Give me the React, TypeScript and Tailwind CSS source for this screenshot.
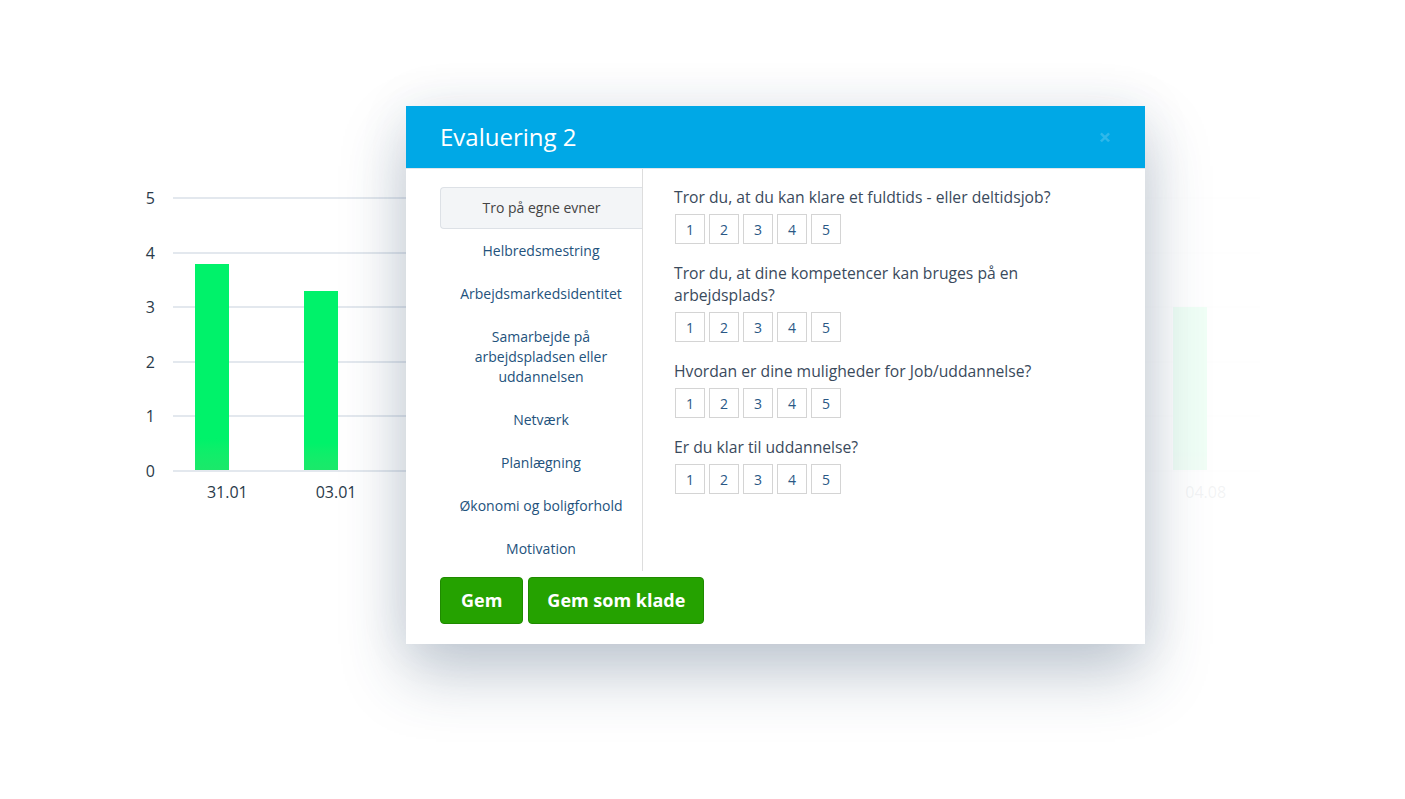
import React from "react"

const yLabels = ["5", "4", "3", "2", "1", "0"]

// only the first two and the last bar are visible; the rest sit behind the modal
const bars = [
  { label: "31.01", value: 3.8 },
  { label: "03.01", value: 3.3 },
  { label: "", value: 3.6 },
  { label: "", value: 2.9 },
  { label: "", value: 4 },
  { label: "", value: 3.2 },
  { label: "", value: 3.5 },
  { label: "", value: 2.8 },
  { label: "", value: 3.1 },
  { label: "04.08", value: 3 },
]

const tabs = [
  "Tro på egne evner",
  "Helbredsmestring",
  "Arbejdsmarkedsidentitet",
  "Samarbejde på arbejdspladsen eller uddannelsen",
  "Netværk",
  "Planlægning",
  "Økonomi og boligforhold",
  "Motivation",
]

const questions = [
  "Tror du, at du kan klare et fuldtids - eller deltidsjob?",
  "Tror du, at dine kompetencer kan bruges på en arbejdsplads?",
  "Hvordan er dine muligheder for Job/uddannelse?",
  "Er du klar til uddannelse?",
]

function Chart() {
  return (
    <div className="flex pt-[197px] pl-[140px]">
      {/* Y axis */}
      <div className="flex flex-col justify-between w-[15px] h-[293px] -mt-[9px] text-right text-[16px] leading-5 text-[#2a3a4a]">
        {yLabels.map((l) => (
          <div key={l}>{l}</div>
        ))}
      </div>

      <div className="ml-[18px] w-[1087px]">
        {/* Plot area: gridlines and bars share one cell */}
        <div className="grid h-[275px]">
          <div className="col-start-1 row-start-1 flex flex-col justify-between">
            {yLabels.map((l) => (
              <div key={l} className="h-[2px] bg-[#e3e8ee]" />
            ))}
          </div>
          <div className="col-start-1 row-start-1 grid grid-cols-10 items-end pb-[2px]">
            {bars.map((b, i) => (
              <div key={i} className="flex items-end h-full">
                <div
                  className="ml-[22px] w-[34px] bg-gradient-to-b from-[#00f26a] from-85% to-[#1be86a]"
                  style={{ height: b.value * 54.3 }}
                />
              </div>
            ))}
          </div>
        </div>

        {/* X labels */}
        <div className="grid grid-cols-10 mt-[10px] text-center text-[16px] leading-5 text-[#2a3a4a]">
          {bars.map((b, i) => (
            <div key={i} className="h-5">
              {b.label}
            </div>
          ))}
        </div>
      </div>
    </div>
  )
}

function RatingRow() {
  return (
    <div className="flex gap-[4px] mt-[6px] ml-px">
      {[1, 2, 3, 4, 5].map((n) => (
        <button
          key={n}
          className="w-[30px] h-[30px] flex items-center justify-center border border-[#d4d4d4] bg-white text-[14px] text-[#2a5885]"
        >
          {n}
        </button>
      ))}
    </div>
  )
}

export default function App() {
  return (
    <div className="relative w-[1405px] h-[799px] overflow-hidden bg-white font-['Open_Sans',sans-serif]">
      <Chart />

      {/* fade over the right part of the chart */}
      <div className="absolute top-0 bottom-0 left-[1145px] right-0 bg-white/[0.94]" />

      {/* Modal */}
      <div className="absolute left-[406px] top-[106px] w-[739px] bg-white shadow-[0_30px_60px_rgba(40,70,100,0.28),0_0_50px_rgba(40,70,100,0.08)]">
        {/* Header */}
        <div className="flex items-center justify-between h-[63px] px-[34px] bg-[#00a8e6] border-b border-[#e2e6ea]">
          <h2 className="text-[24px] font-normal text-white">Evaluering 2</h2>
          <span className="text-[22px] font-bold leading-none text-white/20 -mt-[3px]">×</span>
        </div>

        {/* Body */}
        <div className="flex px-[34px]">
          <div className="w-[203px] pt-[18px] border-r border-[#dddddd]">
            {tabs.map((t, i) =>
              i === 0 ? (
                <div
                  key={t}
                  className="mb-px py-[10px] px-[15px] text-center text-[14px] leading-5 text-[#444] bg-[#f3f5f7] border border-r-0 border-[#dde1e6] rounded-l-[4px]"
                >
                  {t}
                </div>
              ) : (
                <div key={t} className="mb-px py-[11px] px-[15px] text-center text-[14px] leading-5 text-[#23527c]">
                  {t}
                </div>
              ),
            )}
          </div>

          <div className="flex-1 pl-[31px] pt-[17px]">
            {questions.map((q) => (
              <div key={q} className="mb-[18px]">
                <p className="text-[15.7px] leading-[22px] text-[#3a4a5c]">{q}</p>
                <RatingRow />
              </div>
            ))}
          </div>
        </div>

        {/* Footer */}
        <div className="flex gap-[5px] px-[34px] pt-[6px] pb-[20px]">
          <button className="h-[47px] px-[20px] rounded-[4px] bg-[#25a200] border border-[#1f8a00] text-[18px] font-bold text-white">
            Gem
          </button>
          <button className="h-[47px] px-[18px] rounded-[4px] bg-[#25a200] border border-[#1f8a00] text-[18px] font-bold text-white">
            Gem som klade
          </button>
        </div>
      </div>
    </div>
  )
}
